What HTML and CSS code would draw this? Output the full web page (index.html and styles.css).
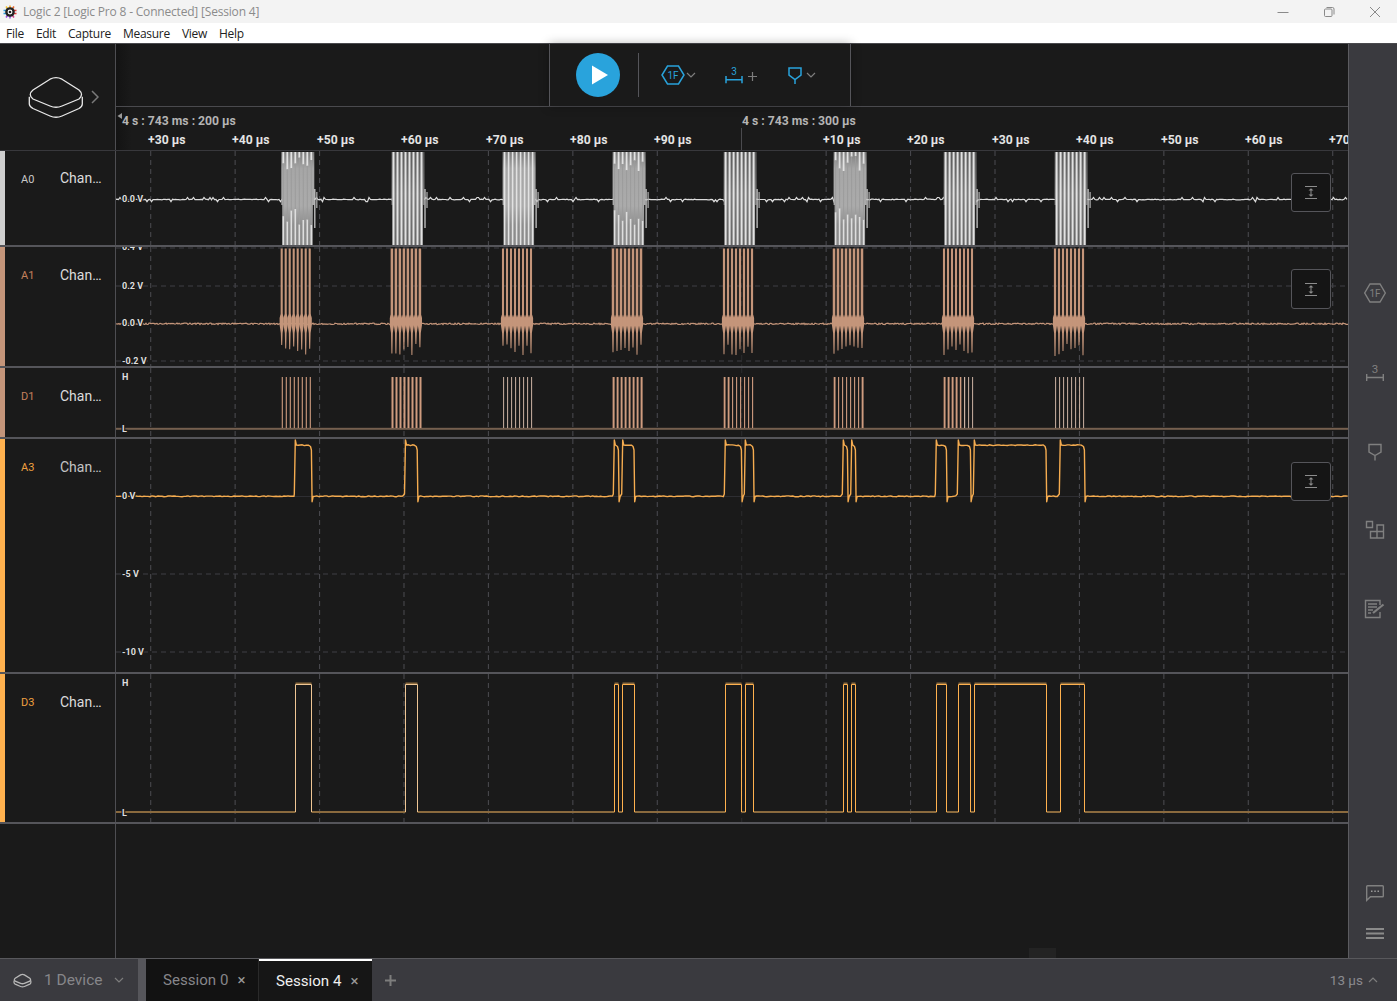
FILE: index.html
```html
<!DOCTYPE html>
<html lang="en">
<head>
<meta charset="utf-8">
<title>Logic 2 [Logic Pro 8 - Connected] [Session 4]</title>
<link rel="stylesheet" href="styles.css">
</head>
<body>
<div class="app">
  <header class="titlebar">
    <svg class="app-icon" viewBox="0 0 14 14" width="14" height="14">
      <g stroke-width="1.6"><path d="M7 .5V3" stroke="#f5a623"/><path d="M3 1.5L4.5 3.5" stroke="#f2c230"/><path d="M11 1.5L9.5 3.5" stroke="#e8642c"/><path d="M.5 5.5H3M.5 8.5H3" stroke="#2f9fe0"/><path d="M11 5.5H13.5M11 8.5H13.5" stroke="#e23b3b"/><path d="M3 12.5L4.5 10.5M7 13.5V11" stroke="#9b4de0"/><path d="M11 12.5L9.5 10.5" stroke="#d43f8d"/></g>
      <circle cx="7" cy="7" r="4.8" fill="#222"/><circle cx="7" cy="7" r="1.9" fill="none" stroke="#fff" stroke-width="1.1"/>
    </svg>
    <span class="title-text">Logic 2 [Logic Pro 8 - Connected] [Session 4]</span>
    <div class="win-controls">
      <span class="win-btn"><svg viewBox="0 0 12 12" width="12" height="12"><path d="M.5 6.5H11.5"/></svg></span>
      <span class="win-btn"><svg viewBox="0 0 12 12" width="12" height="12"><rect x="1.5" y="3" width="7.5" height="7.5" rx="1"/><path d="M3.5 1.5H9.5Q11 1.500 11 3V8.500"/></svg></span>
      <span class="win-btn"><svg viewBox="0 0 12 12" width="12" height="12"><path d="M1 1L11 11M11 1L1 11"/></svg></span>
    </div>
  </header>
  <nav class="menubar">
    <span>File</span><span>Edit</span><span>Capture</span><span>Measure</span><span>View</span><span>Help</span>
  </nav>

  <main class="main">
    <div class="content">
      <section class="top-row">
        <div class="logo-cell">
          <svg class="device-logo" viewBox="0 0 60 46" width="60" height="46">
            <path d="M24 5.200Q30 2.200 36 5.200L53 16Q58 20.500 53 25L36 32Q30 34.500 24 32L7 25Q1.500 20.500 7 16Z"/>
            <path d="M3.300 22.700V30Q3.500 32.500 7 34.500L24 42Q30 44.500 36 42L53 34.500Q56.300 32.500 56.300 30V22.700"/>
          </svg>
          <svg class="logo-chevron" viewBox="0 0 8 14" width="8" height="14"><path d="M1 1L7 7L1 13"/></svg>
        </div>
        <div class="head-cell">
          <div class="toolbar-strip">
            <div class="toolbar">
              <button class="play-btn" type="button" aria-label="Start"><svg viewBox="0 0 44 44" width="44" height="44"><path d="M16 12.500L32 22L16 31.500Z"/></svg></button>
              <span class="tool-divider"></span>
              <svg class="icon-blue hex-tool" viewBox="0 0 24 20" width="24" height="20"><path d="M6.500 1H17.500L23 10L17.500 19H6.500L1 10Z"/><text x="12" y="14" text-anchor="middle">1F</text></svg>
              <svg class="chev chev-a" viewBox="0 0 10 6" width="10" height="6"><path d="M1 1L5 5L9 1"/></svg>
              <svg class="icon-blue range-tool" viewBox="0 0 18 22" width="18" height="22"><path d="M1 13V20.300M17 13V20.300M1 16.700H17"/><text x="9" y="12" text-anchor="middle">3</text></svg>
              <svg class="plus-tool" viewBox="0 0 9 9" width="9" height="9"><path d="M0 4.500H9M4.500 0V9"/></svg>
              <svg class="icon-blue pin-tool" viewBox="0 0 14 18" width="14" height="18"><path d="M1 2H13V9L7 13.500L1 9ZM7 13.500V18"/></svg>
              <svg class="chev chev-b" viewBox="0 0 10 6" width="10" height="6"><path d="M1 1L5 5L9 1"/></svg>
            </div>
          </div>
          <svg class="ruler" viewBox="116 107 1232 43" width="1232" height="43">
            <path class="ruler-mark" d="M122 113L117.500 116L122 119Z"/>
            <path class="ruler-tick" d="M741.500 128V150"/>
            <text class="ruler-major dim" x="122" y="125">4 s : 743 ms : 200 µs</text>
            <text class="ruler-major dim" x="742" y="125">4 s : 743 ms : 300 µs</text>
            <text class="ruler-minor" x="148" y="144">+30 µs</text>
            <text class="ruler-minor" x="232" y="144">+40 µs</text>
            <text class="ruler-minor" x="317" y="144">+50 µs</text>
            <text class="ruler-minor" x="401" y="144">+60 µs</text>
            <text class="ruler-minor" x="486" y="144">+70 µs</text>
            <text class="ruler-minor" x="570" y="144">+80 µs</text>
            <text class="ruler-minor" x="654" y="144">+90 µs</text>
            <text class="ruler-minor" x="823" y="144">+10 µs</text>
            <text class="ruler-minor" x="907" y="144">+20 µs</text>
            <text class="ruler-minor" x="992" y="144">+30 µs</text>
            <text class="ruler-minor" x="1076" y="144">+40 µs</text>
            <text class="ruler-minor" x="1161" y="144">+50 µs</text>
            <text class="ruler-minor" x="1245" y="144">+60 µs</text>
            <text class="ruler-minor" x="1329" y="144">+70 µs</text>
          </svg>
        </div>
      </section>

      <section class="track track-a0">
        <div class="track-label bar-white"><span class="code code-white">A0</span><span class="name">Chan…</span></div>
        <div class="plot">
          <svg viewBox="116 151 1232 94" width="1232" height="94">
            <g id="a0"></g>
            <text class="axis" x="122" y="202">0.0 V</text>
          </svg>
          <button class="fit-btn" type="button" aria-label="Fit"><svg viewBox="0 0 12 13" width="12" height="13"><path d="M0 .500H12M0 12.500H12M6 3.500V9.500"/><path class="fill" d="M3.500 4.500L6 2.300L8.500 4.500ZM3.500 8.500L6 10.700L8.500 8.500Z"/></svg></button>
        </div>
      </section>

      <section class="track track-a1">
        <div class="track-label bar-tan"><span class="code code-tan">A1</span><span class="name">Chan…</span></div>
        <div class="plot">
          <svg viewBox="116 247 1232 119" width="1232" height="119">
            <g id="a1"></g>
            <text class="axis" x="122" y="250">0.4 V</text>
            <text class="axis" x="122" y="289">0.2 V</text>
            <text class="axis" x="122" y="326">0.0 V</text>
            <text class="axis" x="122" y="364">-0.2 V</text>
          </svg>
          <button class="fit-btn fit-tall" type="button" aria-label="Fit"><svg viewBox="0 0 12 13" width="12" height="13"><path d="M0 .500H12M0 12.500H12M6 3.500V9.500"/><path class="fill" d="M3.500 4.500L6 2.300L8.500 4.500ZM3.500 8.500L6 10.700L8.500 8.500Z"/></svg></button>
        </div>
      </section>

      <section class="track track-d1">
        <div class="track-label bar-tan"><span class="code code-tan">D1</span><span class="name">Chan…</span></div>
        <div class="plot">
          <svg viewBox="116 368 1232 69" width="1232" height="69">
            <g id="d1"></g>
            <text class="axis" x="122" y="380">H</text>
            <text class="axis" x="122" y="432">L</text>
          </svg>
        </div>
      </section>

      <section class="track track-a3">
        <div class="track-label bar-orange"><span class="code code-orange">A3</span><span class="name name-dim">Chan…</span></div>
        <div class="plot">
          <svg viewBox="116 439 1232 233" width="1232" height="233">
            <g id="a3"></g>
            <text class="axis" x="122" y="499">0 V</text>
            <text class="axis" x="122" y="577">-5 V</text>
            <text class="axis" x="122" y="655">-10 V</text>
          </svg>
          <button class="fit-btn fit-low" type="button" aria-label="Fit"><svg viewBox="0 0 12 13" width="12" height="13"><path d="M0 .500H12M0 12.500H12M6 3.500V9.500"/><path class="fill" d="M3.500 4.500L6 2.300L8.500 4.500ZM3.500 8.500L6 10.700L8.500 8.500Z"/></svg></button>
        </div>
      </section>

      <section class="track track-d3">
        <div class="track-label bar-orange"><span class="code code-orange">D3</span><span class="name">Chan…</span></div>
        <div class="plot">
          <svg viewBox="116 674 1232 148" width="1232" height="148">
            <g id="d3"></g>
            <text class="axis" x="122" y="686">H</text>
            <text class="axis" x="122" y="816">L</text>
          </svg>
        </div>
      </section>

      <section class="blank">
        <div class="blank-label"></div>
        <span class="drag-tab"></span>
      </section>
    </div>

    <aside class="sidebar">
      <div class="side-top">
        <svg class="side-icon" viewBox="0 0 22 20" width="22" height="20"><path d="M6 1H16L21.300 10L16 19H6L.700 10Z"/><text x="11" y="14" text-anchor="middle">1F</text></svg>
        <svg class="side-icon" viewBox="0 0 18 18" width="18" height="18"><path d="M.700 10V17M17.300 10V17M.700 13.500H17.300"/><text class="big" x="9" y="9" text-anchor="middle">3</text></svg>
        <svg class="side-icon" viewBox="0 0 14 18" width="14" height="18"><path d="M1 1.500H13V9L7 12.500L1 9ZM7 12.500V17.500"/></svg>
        <svg class="side-icon" viewBox="0 0 18 18" width="18" height="18"><path d="M.500 .500H6.500V6.500H.500ZM11 4H17.500V10.500H11ZM4.500 10.500H11V17H4.500ZM11 10.500H17.500V17H11Z"/></svg>
        <svg class="side-icon" viewBox="0 0 20 18" width="20" height="18"><path d="M15 5V.500H.500V17.500H15V12M3 4H12M3 7H12M3 10H8M3 13H6"/><path class="thick" d="M8 13L18.500 4.500"/></svg>
      </div>
      <div class="side-bottom">
        <svg class="side-icon" viewBox="0 0 18 16" width="18" height="16"><path d="M1.500 .700H16.500Q17.300 .700 17.300 1.500V11Q17.300 11.800 16.500 11.800H4.500L.700 15.300V1.500Q.700 .700 1.500 .700Z"/><path class="dots" d="M5 6.200H6.500M8.300 6.200H9.800M11.500 6.200H13"/></svg>
        <svg class="side-icon menu-icon" viewBox="0 0 18 11" width="18" height="11"><path d="M0 1H18M0 5.500H18M0 10H18"/></svg>
      </div>
    </aside>
  </main>

  <footer class="footer">
    <div class="device-tab">
      <svg class="device-mini" viewBox="0 0 60 46" width="19" height="15">
        <path d="M24 5.200Q30 2.200 36 5.200L53 16Q58 20.500 53 25L36 32Q30 34.500 24 32L7 25Q1.500 20.500 7 16Z"/>
        <path d="M3.300 22.700V30Q3.500 32.500 7 34.500L24 42Q30 44.500 36 42L53 34.500Q56.300 32.500 56.300 30V22.700"/>
      </svg>
      <span class="device-text">1 Device</span>
      <svg class="chev device-chev" viewBox="0 0 10 6" width="10" height="6"><path d="M1 1L5 5L9 1"/></svg>
    </div>
    <span class="footer-gap"></span>
    <div class="tab"><span>Session 0</span><span class="tab-x">×</span></div>
    <div class="tab tab-active"><span>Session 4</span><span class="tab-x">×</span></div>
    <svg class="tab-plus" viewBox="0 0 11 11" width="11" height="11"><path d="M0 5.500H11M5.500 0V11"/></svg>
    <div class="zoom-level"><span>13 µs</span><svg class="chev" viewBox="0 0 10 6" width="10" height="6"><path d="M1 5L5 1L9 5"/></svg></div>
  </footer>
</div>
<script src="app.js"></script>
</body>
</html>
```

FILE: styles.css
```css
* { box-sizing: border-box; }
html, body { margin: 0; height: 100%; background: #1a1a1a; }
body { overflow: hidden; font-family: Roboto, "Liberation Sans", sans-serif; }
.app { display: flex; flex-direction: column; width: 1397px; height: 1001px; }

/* window chrome */
.titlebar { display: flex; align-items: center; height: 23px; background: #f3f3f3; padding-left: 3px; flex: none; }
.app-icon { flex: none; }
.title-text { margin-left: 6px; font: 12px "Open Sans", "Liberation Sans", sans-serif; letter-spacing: -.19px; color: #8b8b8b; }
.win-controls { display: flex; margin-left: auto; margin-right: -1px; }
.win-btn { display: flex; align-items: center; justify-content: center; width: 46px; height: 23px; }
.win-btn svg { fill: none; stroke: #8a8a8a; stroke-width: 1; }
.menubar { display: flex; gap: 12px; align-items: center; height: 20px; background: #fff; padding-left: 6px; flex: none; font: 12px "Open Sans", "Liberation Sans", sans-serif; letter-spacing: -.28px; color: #222; }

/* main */
.main { display: flex; flex: none; height: 915px; border-top: 1px solid #4a4a4e; }
.content { display: flex; flex-direction: column; width: 1348px; flex: none; }
.top-row { display: flex; height: 107px; flex: none; border-bottom: 1px solid #38383c; }
.logo-cell { display: flex; align-items: center; width: 116px; flex: none; border-right: 1px solid #4e4e52; padding: 0 0 0 26px; }
.device-logo path { fill: none; stroke: #e8e8e8; stroke-width: 1.3; }
.logo-chevron { margin-left: 5px; fill: none; stroke: #7a7a7a; stroke-width: 1.5; }
.head-cell { flex: 1; display: flex; flex-direction: column; min-width: 0; background: linear-gradient(90deg, #131313, #1a1a1a 16px); }
.toolbar-strip { display: flex; height: 63px; flex: none; border-bottom: 1px solid #4a4a4e; padding-left: 433px; }
.toolbar { display: flex; align-items: center; width: 302px; height: 62px; background: #1a1a1a; border-left: 1px solid #55555a; border-right: 1px solid #55555a; box-shadow: 0 0 10px rgba(0, 0, 0, .3); padding-left: 26px; }
.play-btn { width: 44px; height: 44px; padding: 0; border: 0; border-radius: 50%; background: #29a3dc; flex: none; }
.play-btn svg { display: block; fill: #fff; }
.tool-divider { width: 1px; height: 44px; background: #55555a; margin-left: 18px; flex: none; }
.icon-blue { flex: none; fill: none; stroke: #29a3dc; stroke-width: 1.5; }
.icon-blue text { fill: #29a3dc; stroke: none; font: 10px Roboto, sans-serif; }
.hex-tool { margin-left: 22px; }
.chev { flex: none; fill: none; stroke: #7d7d7d; stroke-width: 1.2; }
.chev-a { margin-left: 1px; }
.range-tool { margin-left: 29px; margin-top: -3px; }
.plus-tool { margin-left: 5px; fill: none; stroke: #7d7d7d; stroke-width: 1.2; margin-top: 2px; }
.pin-tool { margin-left: 31px; margin-top: -1px; }
.chev-b { margin-left: 4px; }
.ruler { display: block; flex: none; }
.ruler text { font-family: Roboto, sans-serif; font-weight: 700; font-size: 12.200px; }
.ruler-minor { fill: #e4e4e4; }
.ruler-major.dim { fill: #b4b4b4; }
.ruler-mark { fill: #999; }
.ruler-tick { stroke: #4a4a4e; stroke-width: 1; }

/* tracks */
.track { display: flex; flex: none; border-bottom: 2px solid #55555a; }
.track-a0 { height: 96px; }
.track-a1 { height: 121px; }
.track-d1 { height: 71px; }
.track-a3 { height: 235px; }
.track-d3 { height: 150px; }
.track-label { display: flex; width: 116px; flex: none; border-right: 1px solid #4e4e52; border-left: 5px solid #ccc; padding-top: 20px; align-items: flex-start; }
.track-a0 .name { margin-top: -1px; }
.bar-white { border-left-color: #cfcfcf; }
.bar-tan { border-left-color: #c4957a; }
.bar-orange { border-left-color: #ffb14e; }
.code { width: 55px; padding-left: 16px; font-size: 11px; line-height: 18px; flex: none; }
.code-white { color: #c8c8c8; }
.code-tan { color: #c4805c; }
.code-orange { color: #f0a040; }
.name { font-size: 14px; line-height: 16px; color: #dcdcdc; }
.name-dim { color: #c4c4c4; }
.plot { position: relative; flex: 1; min-width: 0; overflow: hidden; }
.plot > svg { display: block; }
.axis { font-family: Roboto, sans-serif; font-size: 9px; font-weight: 700; fill: #dedede; paint-order: stroke; stroke: #1a1a1a; stroke-width: 2.5px; stroke-linejoin: round; }
.fit-btn { position: absolute; top: 22px; right: 17px; display: flex; align-items: center; justify-content: center; width: 40px; height: 39px; padding: 0; background: #151515; border: 1px solid #55555a; border-radius: 3px; }
.fit-tall { height: 40px; }
.fit-low { top: 23px; }
.fit-btn svg { fill: none; stroke: #8c8c8c; stroke-width: 1; }
.fit-btn .fill { fill: #8c8c8c; stroke: none; }
.blank { position: relative; display: flex; flex: 1; min-height: 0; }
.blank-label { width: 116px; border-right: 1px solid #4e4e52; }
.drag-tab { position: absolute; left: 1029px; bottom: 0; width: 27px; height: 10px; background: #232323; }

/* sidebar */
.sidebar { display: flex; flex-direction: column; align-items: center; width: 49px; flex: none; background: #3a3a3f; border-left: 1px solid #5c5c60; padding: 239px 0 19px 4px; }
.side-top { display: flex; flex-direction: column; align-items: center; gap: 60.800px; }
.side-bottom { display: flex; flex-direction: column; align-items: center; gap: 27px; margin-top: auto; }
.side-icon { display: block; overflow: visible; fill: none; stroke: #808080; stroke-width: 1.4; }
.side-icon text { fill: #808080; stroke: none; font: 10px Roboto, sans-serif; }
.side-icon text.big { font-size: 11.500px; }
.side-icon .thick { stroke-width: 2.2; }
.side-icon .dots { stroke-width: 1.4; stroke: #9a9a9a; }
.menu-icon { stroke-width: 2; stroke: #8a8a8a; }

/* footer */
.footer { display: flex; align-items: stretch; height: 43px; flex: none; background: #3a3a3f; border-top: 1px solid #58585c; }
.device-tab { display: flex; align-items: center; width: 138px; flex: none; padding-left: 13px; color: #86868a; font-size: 15.500px; }
.device-mini path { fill: none; stroke: #b8b8b8; stroke-width: 4; }
.device-text { margin-left: 12px; }
.device-chev { margin-left: 12px; }
.footer-gap { width: 8px; flex: none; background: #56565b; }
.tab { display: flex; align-items: center; width: 113px; flex: none; padding-left: 17px; background: #121212; color: #86868a; font-size: 15.100px; border-right: 1px solid #2a2a2a; }
.tab-x { margin-left: 9px; font-size: 15px; color: #9a9a9a; }
.tab-active { width: 113px; background: #161616; color: #f0f0f0; border-top: 2px solid #fff; border-right: 0; }
.tab-plus { align-self: center; margin-left: 13px; fill: none; stroke: #7d7d7d; stroke-width: 2; }
.zoom-level { display: flex; align-items: center; gap: 5px; margin-left: auto; padding-right: 19px; color: #8a8a8f; font-size: 13.500px; }
```

FILE: app.js
```js
(function () {
  var seed = 12345;
  function rnd() {
    seed = (seed * 1664525 + 1013904223) % 4294967296;
    return seed / 4294967296;
  }
  var X1 = 1348;
  var STARTS = [281.7, 391.9, 503, 613, 724, 834, 944, 1055];
  var PULSES = [
    [295.3, 311.7], [405.5, 417.5],
    [614.3, 618.7], [622.7, 634.3],
    [725.3, 741.7], [745.3, 753.7],
    [843.3, 847.7], [851.7, 855.7],
    [936.3, 946.7], [958.3, 970.7], [974.3, 1046.3],
    [1060.3, 1084.7]
  ];

  function grid(top, bottom) {
    var s = '';
    for (var k = 0; k <= 14; k++) {
      var x = (150.7 + 84.43 * k).toFixed(2);
      var op = k === 7 ? ' opacity="0.35"' : '';
      s += '<path d="M' + x + ' ' + top + 'V' + bottom + '" stroke="#48484d" stroke-width="1.1" stroke-dasharray="5 4"' + op + ' fill="none"/>';
    }
    return s;
  }
  function hdash(y) {
    return '<path d="M116 ' + y + 'H1348" stroke="#3f3f44" stroke-width="1" stroke-dasharray="5 4" fill="none"/>';
  }
  function line(x, y1, y2, w, col) {
    return '<rect x="' + (x - w / 2).toFixed(2) + '" y="' + y1.toFixed(1) + '" width="' + w + '" height="' + (y2 - y1).toFixed(1) + '" fill="' + col + '"/>';
  }

  /* A0: analog trace with grey ringing bursts */
  function buildA0() {
    var s = '<defs>' +
      '<linearGradient id="burstHeavy" x1="0" y1="0" x2="0" y2="1">' +
      '<stop offset="0" stop-color="#7c7c7c"/><stop offset=".18" stop-color="#a6a6a6"/>' +
      '<stop offset=".58" stop-color="#ababab"/><stop offset=".78" stop-color="#8e8e8e"/><stop offset="1" stop-color="#8a8a8a"/>' +
      '</linearGradient>' +
      '<linearGradient id="burstLight" x1="0" y1="0" x2="0" y2="1">' +
      '<stop offset="0" stop-color="#5a5a5a"/><stop offset=".45" stop-color="#7a7a7a"/><stop offset="1" stop-color="#666"/>' +
      '</linearGradient></defs>';
    s += grid(151, 245);
    var d = 'M116 199.5';
    for (var x = 117; x <= X1; x += 1.5) {
      var r = rnd();
      var y = 199.5 + (r > 0.86 ? (rnd() > 0.5 ? 2.2 : -2) : (rnd() - 0.5) * 0.6);
      d += 'L' + x + ' ' + y.toFixed(1);
    }
    s += '<path d="' + d + '" fill="none" stroke="#dcdcdc" stroke-width="1.2"/>';
    var heavy = [1, 0, 0.5, 1, 0, 1, 0, 0];
    STARTS.forEach(function (st, i) {
      var h = heavy[i], b = st - 0.4;
      s += '<path d="M' + b + ' 152H' + (b + 33) + 'V205H' + (b + 31.5) + 'V245H' + (b + 1) + 'V205H' + b + 'Z" fill="url(#' + (h ? 'burstHeavy' : 'burstLight') + ')"/>';
      s += line(b + 33.5, 189, 228, 1.3, '#c8c8c8');
      s += line(b + 35.5, 192, 208, 1.3, '#a8a8a8');
      for (var k = 0; k < 8; k++) {
        var x2 = b + 2 + k * 4;
        var col = '#e2e2e2';
        if (h === 1) {
          var t2 = 156 + rnd() * 16;
          var t3 = 208 + rnd() * 18;
          s += line(x2, 152, t2, 1.8, col) + line(x2, t3, 245, 1.6, '#dedede');
          s += line(x2, t2, t3, 1, '#9c9c9c');
        } else if (h) {
          s += line(x2, 152, 245, 1.6, col);
        } else {
          s += line(x2, 152, 245, 2, col);
        }
      }
    });
    return s;
  }

  /* A1: analog trace with clipped positive spikes */
  function buildA1() {
    var s = grid(247, 366) + hdash(248) + hdash(286) + hdash(361);
    var d = 'M116 324';
    for (var x = 117; x <= X1; x += 1) {
      d += 'L' + x + ' ' + (323.8 + (rnd() - 0.5) * 1.5).toFixed(1);
    }
    s += '<path d="' + d + '" fill="none" stroke="#c4957a" stroke-width="1.200"/>';
    var widths = [2.1, 2.5, 2.1, 2.5, 2.2, 2.5, 2.1, 2.2];
    var TAN = '#c4957a';
    STARTS.forEach(function (st, i) {
      for (var k = 0; k < 8; k++) {
        var c = st + k * 4;
        var end = 344 + rnd() * 12;
        s += line(c, 248.5, 318, widths[i], TAN);
        s += '<path d="M' + (c - 2.1) + ' 318Q' + c + ' 309 ' + (c + 2.1) + ' 318V325L' + (c + 0.9) + ' 333L' + (c + 0.5) + ' ' + end.toFixed(1) +
          'H' + (c - 0.5) + 'L' + (c - 0.9) + ' 333L' + (c - 2.1) + ' 325Z" fill="' + TAN + '"/>';
      }
    });
    return s;
  }

  /* D1: digital pulses; line weight differs burst by burst */
  function buildD1() {
    var s = grid(368, 437);
    s += '<rect x="116" y="427.800" width="1232" height="2" fill="#76604f"/>';
    var TAN = '#cf9c7f', PALE = '#cdb3a3';
    var w = [
      [1.1, 1.1, 1.1, 1.1, 1.1, 1.1, 1.1, 1.1],
      [2, 2, 2, 2, 2, 2, 2, 2],
      [1, 1, 1, 1, 1, 1, 1, 1],
      [2, 1.9, 1.9, 1.9, 1.9, 1.9, 1.9, 2],
      [1.8, 1.8, 1.1, 1.1, 1.1, 1.1, 1.1, 1.1],
      [1.8, 1.1, 1.1, 1.1, 1.1, 1.1, 1.1, 1.9],
      [1.9, 1.9, 1.9, 1.9, 1.5, 1.2, 1, 1],
      [1, 1, 1, 1, 1, 1, 1, 1]
    ];
    STARTS.forEach(function (st, i) {
      for (var k = 0; k < 8; k++) {
        var wd = w[i][k];
        s += line(st + 0.6 + k * 4, 377, 428, wd, wd < 1.3 && (i === 2 || i === 7 || i === 6) ? PALE : TAN);
      }
    });
    return s;
  }

  /* A3: analog square wave with overshoot */
  function buildA3() {
    var s = grid(439, 672) + hdash(574) + hdash(652);
    s += '<path d="M116 496.500H1348" stroke="#2e2e32" stroke-width="1" fill="none"/>';
    var d = 'M116 496.300';
    var cur = 116;
    function noisy(from, to, y) {
      for (var x = from + 2; x < to - 1; x += 2) {
        d += 'L' + x.toFixed(1) + ' ' + (y + (rnd() - 0.5) * 0.9).toFixed(1);
      }
    }
    PULSES.forEach(function (p) {
      noisy(cur, p[0], 496.3);
      d += 'L' + (p[0] - 1).toFixed(1) + ' 494L' + p[0].toFixed(1) + ' 440L' + (p[0] + 1).toFixed(1) + ' 445';
      noisy(p[0] + 1, p[1] - 1, 445.2);
      d += 'L' + (p[1] - 1.2).toFixed(1) + ' 446.500L' + (p[1] - 0.3).toFixed(1) + ' 450L' + (p[1] + 0.4).toFixed(1) + ' 501.700L' + (p[1] + 1.4).toFixed(1) + ' 496.500';
      cur = p[1] + 1;
    });
    noisy(cur, X1 + 2, 496.3);
    s += '<path d="' + d + '" fill="none" stroke="#f5ac50" stroke-width="1.400" stroke-linejoin="round"/>';
    return s;
  }

  /* D3: clean digital version of A3 */
  function buildD3() {
    var s = grid(674, 822);
    var low = 'M116 812', high = '';
    var edges = '';
    PULSES.forEach(function (p, i) {
      var a = Math.floor(p[0]) + 0.5, b = Math.floor(p[1]) + 0.5;
      low += 'H' + a + 'M' + b + ' 812';
      high += 'M' + a + ' 683.200H' + b;
      var col = i < 2 ? '#efc694' : '#ffb14e';
      edges += '<path d="M' + a + ' 812V684.500H' + b + 'V812" fill="none" stroke="' + col + '" stroke-width="1"/>';
    });
    low += 'H1348';
    s += '<path d="' + low + '" fill="none" stroke="#8a6a3e" stroke-width="2"/>';
    s += '<path d="' + high + '" fill="none" stroke="#8a6a3e" stroke-width="1.500"/>';
    return s + edges;
  }

  document.getElementById('a0').innerHTML = buildA0();
  document.getElementById('a1').innerHTML = buildA1();
  document.getElementById('d1').innerHTML = buildD1();
  document.getElementById('a3').innerHTML = buildA3();
  document.getElementById('d3').innerHTML = buildD3();
})();
```
